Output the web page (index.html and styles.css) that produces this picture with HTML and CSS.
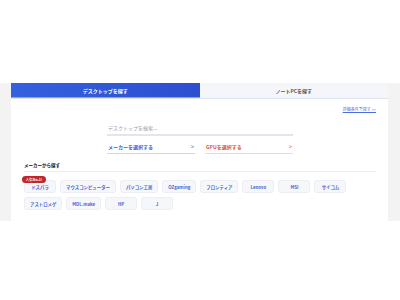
FILE: index.html
```html
<!DOCTYPE html>
<html lang="ja">
<head>
    <meta charset="UTF-8">
    <meta name="viewport" content="width=device-width, initial-scale=1.0">
    <title>PCを探す</title>
    <link rel="stylesheet" href="styles.css">
</head>
<body>
    <div class="spacer"></div>
    <section class="band">
        <div class="card">
            <div class="tabs">
                <div class="tab active">デスクトップを探す</div>
                <div class="tab">ノートPCを探す</div>
            </div>
            <div class="content">
                <div class="more-row">
                    <a class="more" href="#">詳細条件で探す &gt;&gt;</a>
                </div>
                <div class="finder">
                    <div class="search">デスクトップを検索...</div>
                    <div class="selects">
                        <div class="select maker">
                            <span>メーカーを選択する</span>
                            <span class="arrow">&gt;</span>
                        </div>
                        <div class="select gpu">
                            <span>GPUを選択する</span>
                            <span class="arrow">&gt;</span>
                        </div>
                    </div>
                </div>
                <h3 class="heading">メーカーから探す</h3>
                <div class="makers">
                    <div class="maker-btn popular">
                        <span class="badge">人気No.1!</span>
                        ドスパラ
                    </div>
                    <div class="maker-btn">マウスコンピューター</div>
                    <div class="maker-btn">パソコン工房</div>
                    <div class="maker-btn">OZgaming</div>
                    <div class="maker-btn">フロンティア</div>
                    <div class="maker-btn">Lenovo</div>
                    <div class="maker-btn">MSI</div>
                    <div class="maker-btn">サイコム</div>
                    <div class="maker-btn">アストロメゲ</div>
                    <div class="maker-btn">MDL.make</div>
                    <div class="maker-btn">HP</div>
                    <div class="maker-btn">J</div>
                </div>
            </div>
        </div>
    </section>
</body>
</html>
```

FILE: styles.css
```css
*{
    box-sizing: border-box;
}

body{
    margin: 0;
    background: #fff;
    font-family: "Noto Sans CJK JP", "Noto Sans", sans-serif;
}

.spacer{
    height: 83px;
}

.band{
    background: #f3f3f3;
    padding: 0 12px 0 11px;
}

.card{
    background: #fff;
    padding-bottom: 11px;
}

.tabs{
    display: grid;
    grid-template-columns: 1fr 1fr;
    height: 16px;
    border-bottom: 1px solid #dfe3ef;
}

.tab{
    display: flex;
    align-items: center;
    justify-content: center;
    font-size: 5px;
    font-weight: 700;
    color: #555;
    background: #f5f6f9;
}

.tab.active{
    background: linear-gradient(90deg, #3560de, #2c4fcf);
    color: #fff;
    border-bottom: 1px solid #8aa3ee;
}

.content{
    padding: 0 12px 0 13px;
}

.more-row{
    display: flex;
    justify-content: flex-end;
    padding-top: 7px;
}

.more{
    font-size: 4px;
    line-height: 6px;
    color: #4a6fe0;
    text-decoration: underline;
}

.finder{
    width: 186px;
    margin: 12px auto 0;
}

.search{
    font-size: 5px;
    line-height: 7px;
    color: #9a9ca6;
    padding: 0 1px 3px;
    border-bottom: 2px solid #e4e5ec;
}

.selects{
    display: flex;
    justify-content: space-between;
    margin-top: 7px;
}

.select{
    width: 88px;
    display: flex;
    align-items: center;
    justify-content: space-between;
    font-size: 5px;
    line-height: 7px;
    font-weight: 700;
    padding: 0 1px 3px;
}

.select.maker{
    color: #3a62dc;
    border-bottom: 1px solid #c9d6f8;
}

.select.gpu{
    color: #e0503f;
    border-bottom: 1px solid #f8d5cf;
}

.arrow{
    font-size: 6px;
    font-weight: 400;
}

.heading{
    margin: 8px 0 0;
    font-size: 4.5px;
    line-height: 6px;
    font-weight: 700;
    color: #111;
    padding-bottom: 3px;
    border-bottom: 1px solid #eeeff3;
}

.makers{
    display: flex;
    flex-wrap: wrap;
    gap: 4px;
    margin-top: 8px;
}

.maker-btn{
    position: relative;
    min-width: 32px;
    height: 13px;
    padding: 0 5px;
    display: flex;
    align-items: center;
    justify-content: center;
    font-size: 4.4px;
    font-weight: 700;
    color: #4664d8;
    background: #f6f7fb;
    border: 1px solid #eceef4;
    border-radius: 3px;
}

.badge{
    position: absolute;
    left: -3px;
    top: -5px;
    width: 24px;
    height: 7px;
    display: flex;
    align-items: center;
    justify-content: center;
    font-size: 3.5px;
    color: #fff;
    background: #c0262b;
    border-radius: 4px;
}
```
